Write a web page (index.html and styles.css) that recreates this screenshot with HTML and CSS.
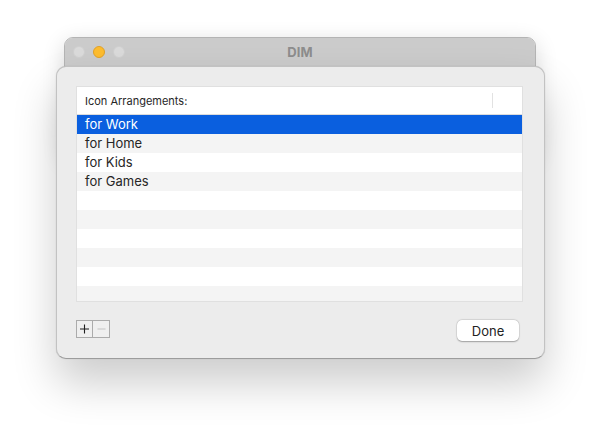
FILE: index.html
```html
<!DOCTYPE html>
<html>
<head>
<meta charset="utf-8">
<link rel="stylesheet" href="styles.css">
</head>
<body>
<div class="desktop">
  <div class="window">
    <div class="titlebar">
      <div class="lights">
        <span class="light"></span>
        <span class="light orange"></span>
        <span class="light"></span>
      </div>
      <div class="title">DIM</div>
    </div>
  </div>
  <div class="sheet">
    <div class="table">
      <div class="thead">
        <span class="th-label">Icon Arrangements:</span>
        <span class="th-sep"></span>
      </div>
      <div class="tbody">
        <div class="row selected">for Work</div>
        <div class="row">for Home</div>
        <div class="row">for Kids</div>
        <div class="row">for Games</div>
        <div class="row"></div>
        <div class="row"></div>
        <div class="row"></div>
        <div class="row"></div>
        <div class="row"></div>
        <div class="row"></div>
      </div>
    </div>
    <div class="footer">
      <div class="segs">
        <span class="seg">
          <svg width="15" height="16" viewBox="0 0 15 16"><path d="M7.5 3.5v9M3 8h9" stroke="#1e1e1e" stroke-width="1.1" fill="none"/></svg>
        </span>
        <span class="seg disabled">
          <svg width="15" height="16" viewBox="0 0 15 16"><path d="M3.5 8h8" stroke="#c6c6c6" stroke-width="1.1" fill="none"/></svg>
        </span>
      </div>
      <button class="btn">Done</button>
    </div>
  </div>
</div>
</body>
</html>
```
FILE: styles.css
```css
html, body {
  margin: 0;
  padding: 0;
  background: #ffffff;
}
body {
  font-family: Inter, "Liberation Sans", sans-serif;
  width: 600px;
  height: 433px;
  overflow: hidden;
}
.desktop {
  position: relative;
  width: 600px;
  height: 433px;
}
.window {
  position: absolute;
  left: 64px;
  top: 37px;
  width: 472px;
  height: 120px;
  background: #ececec;
  border: 1px solid #b4b4b4;
  border-radius: 9px;
  box-shadow: 0 6px 22px rgba(0,0,0,0.16);
  overflow: hidden;
  box-sizing: border-box;
}
.titlebar {
  position: relative;
  height: 28px;
  background: #cbcbcb;
  border-bottom: 1px solid #a9a9a9;
  display: flex;
  align-items: center;
  justify-content: center;
}
.lights {
  position: absolute;
  left: 8px;
  top: 8px;
  display: flex;
  gap: 8px;
}
.light {
  width: 12px;
  height: 12px;
  border-radius: 50%;
  background: #dadada;
  box-sizing: border-box;
  border: 0.5px solid #cfcfcf;
}
.light.orange {
  background: #fdbc2f;
  border-color: #e0a128;
}
.title {
  font-size: 13px;
  font-weight: 700;
  color: #8d8d8d;
  letter-spacing: 0.1px;
}
.sheet {
  position: absolute;
  left: 56px;
  top: 66px;
  width: 489px;
  height: 293px;
  box-sizing: border-box;
  background: #ececec;
  border-radius: 10px;
  border: 1px solid #c2c2c2;
  border-bottom-color: #9c9c9c;
  box-shadow: 0 24px 44px rgba(0,0,0,0.2), 0 0 1px rgba(0,0,0,0.2);
  padding: 19px 21px 17px 19px;
  display: flex;
  flex-direction: column;
}
.table {
  height: 217px;
  background: #ffffff;
  border: 1px solid #e0e0e0;
  box-sizing: border-box;
  overflow: hidden;
}
.thead {
  height: 27px;
  border-bottom: 1px solid #dcdcdc;
  display: flex;
  align-items: center;
  justify-content: space-between;
  padding-left: 8px;
  padding-right: 29px;
}
.th-label {
  font-size: 11px;
  color: #262626;
}
.th-sep {
  width: 1px;
  height: 15px;
  background: #e2e2e2;
}
.row {
  height: 19px;
  line-height: 19px;
  font-size: 13px;
  color: #262626;
  padding-left: 8px;
  background: #ffffff;
}
.row:nth-child(even) {
  background: #f4f4f4;
}
.row.selected {
  background: #0a5fdf;
  color: #ffffff;
}
.footer {
  margin-top: 17px;
  display: flex;
  justify-content: space-between;
  align-items: flex-start;
}
.segs {
  display: flex;
  margin-top: 1px;
}
.seg {
  width: 17px;
  height: 18px;
  box-sizing: border-box;
  border: 1px solid #ababab;
  background: #efefef;
  display: flex;
  align-items: center;
  justify-content: center;
}
.seg + .seg {
  border-left: none;
}
.btn {
  width: 62px;
  height: 21px;
  margin-right: 4px;
  margin-top: 1px;
  background: #ffffff;
  border: none;
  border-radius: 5px;
  box-shadow: 0 0.5px 1.5px rgba(0,0,0,0.3), 0 0 0 0.5px rgba(0,0,0,0.08);
  font-family: Inter, "Liberation Sans", sans-serif;
  font-size: 13px;
  color: #222222;
  padding: 0;
}
```
